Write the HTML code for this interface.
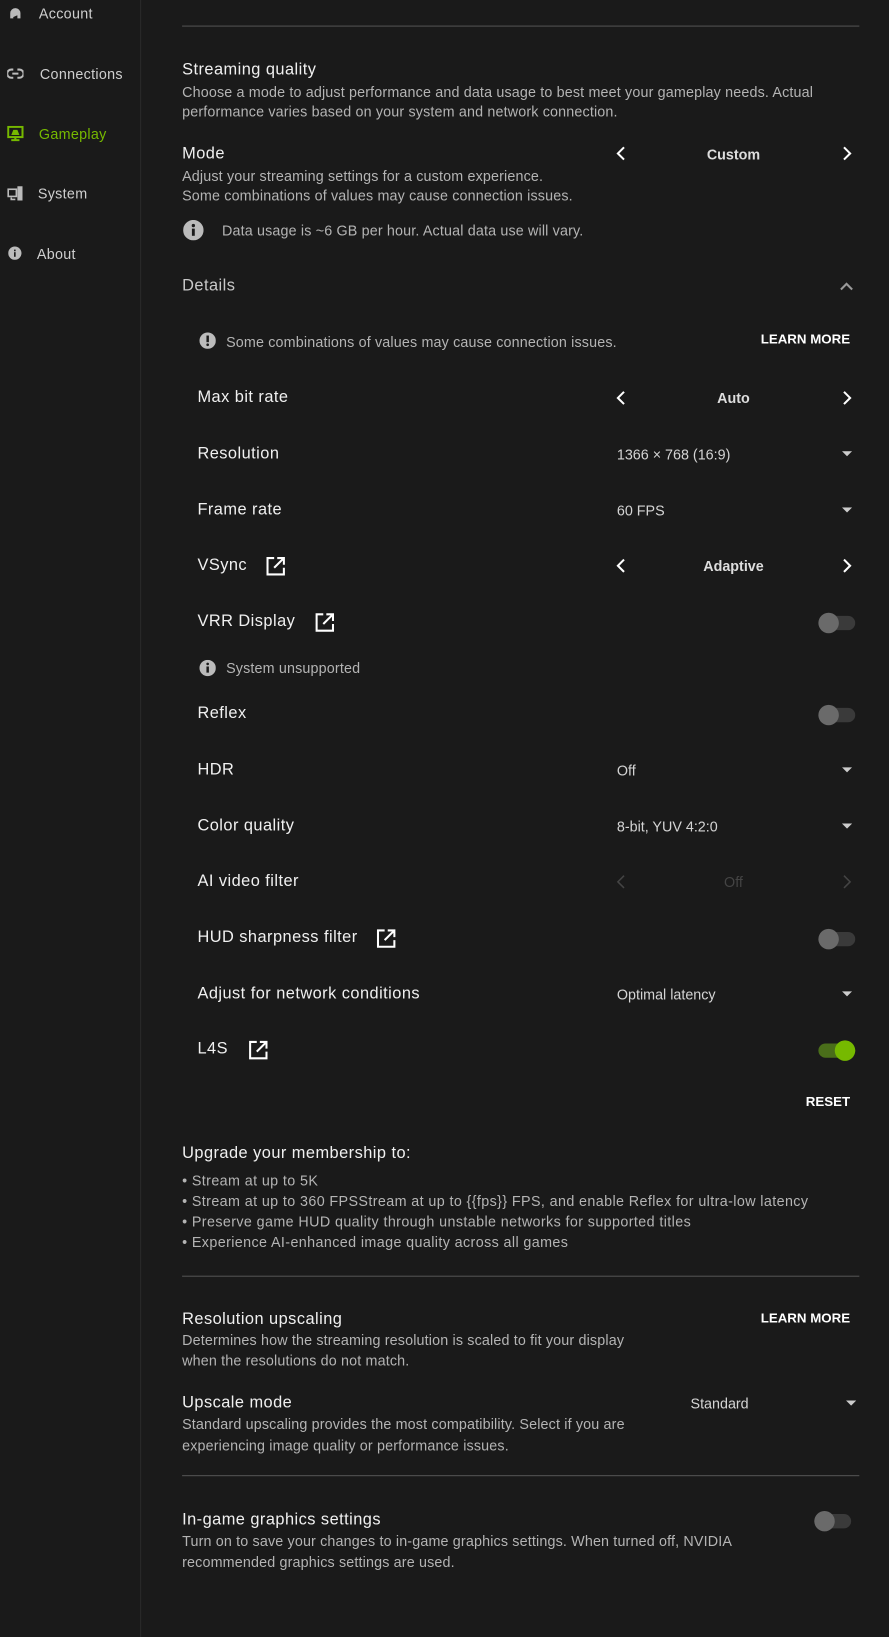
<!DOCTYPE html>
<html><head><meta charset="utf-8"><style>
*{margin:0;padding:0;box-sizing:border-box}
body{width:889px;height:1604px;background:#1a1a1a;font-family:"Liberation Sans",sans-serif;position:relative;overflow:hidden;color:#e6e6e6}
#w{position:absolute;left:0;top:0;width:869px;height:1568px;transform:scale(1.023);transform-origin:0 0}
.a{position:absolute;white-space:nowrap;line-height:20px}
.side{left:0;top:0;width:138px;height:1600px;border-right:1px solid #2c2c2c;position:absolute}
.nav{font-size:14px;color:#cfcfcf;letter-spacing:.3px}
.h{font-size:16px;color:#f0f0f0;letter-spacing:.45px}
.d{font-size:14px;color:#b4b4b4;letter-spacing:.15px}
.v{font-size:14px;color:#d4d4d4;letter-spacing:0}
.b{font-size:13px;font-weight:bold;color:#fff}
.u{font-size:14px;color:#b4b4b4;letter-spacing:.38px}
.line{position:absolute;left:178px;width:662px;height:1px;background:#555}
.tg{position:absolute;width:36px;height:14px;border-radius:7px;background:#3a3a3a}
.tg i{position:absolute;left:0;top:-3px;width:20px;height:20px;border-radius:50%;background:#6a6a6a}
.tg.on{background:#4a6e1a}.tg.on i{left:16px;background:#76b900}
svg{position:absolute}
</style></head><body><div id="w">
<div class="side"></div>
<svg style="left:8px;top:6px" width="14" height="14" viewBox="0 0 14 14"><path d="M2 12V7a5 5 0 0 1 10 0v5h-3V8h2M2 8h3v4H2" fill="#bbb"/></svg>
<svg style="left:7px;top:66px" width="16" height="12" viewBox="0 0 16 12"><path d="M6 2H4a4 4 0 0 0 0 8h2M10 2h2a4 4 0 0 1 0 8h-2M5 6h6" stroke="#bbb" stroke-width="2" fill="none"/></svg>
<svg style="left:7px;top:123px" width="16" height="16" viewBox="0 0 16 16"><rect x="1" y="1" width="14" height="10" fill="none" stroke="#76b900" stroke-width="2"/><path d="M4 9l2-5h4l2 5z M7 11h2v2h3v2H4v-2h3z" fill="#76b900"/></svg>
<svg style="left:7px;top:182px" width="16" height="15" viewBox="0 0 16 15"><rect x="1" y="3" width="8" height="7" fill="none" stroke="#bbb" stroke-width="1.6"/><path d="M4 11v2h4" stroke="#bbb" stroke-width="1.6" fill="none"/><rect x="10" y="0" width="5" height="14" fill="#bbb"/></svg>
<svg style="left:8px;top:241px" width="13" height="13" viewBox="0 0 13 13"><circle cx="6.5" cy="6.5" r="6.5" fill="#bbb"/><rect x="5.7" y="5.5" width="1.6" height="4.5" fill="#1a1a1a"/><rect x="5.7" y="3" width="1.6" height="1.6" fill="#1a1a1a"/></svg>
<div class="a nav" style="left:38px;top:3px">Account</div>
<div class="a nav" style="left:39px;top:62px">Connections</div>
<div class="a nav" style="left:38px;top:121px;color:#76b900">Gameplay</div>
<div class="a nav" style="left:37px;top:179px">System</div>
<div class="a nav" style="left:36px;top:238px">About</div>

<div class="line" style="top:25px"></div>
<div class="a h" style="left:178px;top:59px">Streaming quality</div>
<div class="a d" style="left:178px;top:80px">Choose a mode to adjust performance and data usage to best meet your gameplay needs. Actual</div>
<div class="a d" style="left:178px;top:99px">performance varies based on your system and network connection.</div>
<div class="a h" style="left:178px;top:141px">Mode</div>
<div class="a d" style="left:178px;top:162px">Adjust your streaming settings for a custom experience.</div>
<div class="a d" style="left:178px;top:181px">Some combinations of values may cause connection issues.</div>
<svg style="left:179px;top:215px" width="20" height="20" viewBox="0 0 20 20"><circle cx="10" cy="10" r="10" fill="#bbb"/><rect x="8.6" y="8.5" width="2.8" height="7" fill="#1a1a1a"/><circle cx="10" cy="5.5" r="1.6" fill="#1a1a1a"/></svg>
<div class="a d" style="left:217px;top:215px">Data usage is ~6 GB per hour. Actual data use will vary.</div>
<div class="a h" style="left:178px;top:270px;color:#c8c8c8">Details</div>
<svg style="left:821px;top:276px" width="13" height="8" viewBox="0 0 13 8"><path d="M1 7l5.5-5.5L12 7" stroke="#999" stroke-width="2" fill="none"/></svg>
<svg style="left:195px;top:325px" width="16" height="16" viewBox="0 0 16 16"><circle cx="8" cy="8" r="8" fill="#bbb"/><rect x="6.8" y="3" width="2.4" height="6.5" fill="#1a1a1a"/><circle cx="8" cy="12" r="1.3" fill="#1a1a1a"/></svg>
<div class="a d" style="left:221px;top:324px">Some combinations of values may cause connection issues.</div>
<div class="a b" style="right:38px;top:322px">LEARN MORE</div>

<div class="a h" style="left:193px;top:379px">Max bit rate</div>
<div class="a h" style="left:193px;top:434px">Resolution</div>
<div class="a h" style="left:193px;top:489px">Frame rate</div>
<div class="a h" style="left:193px;top:543px">VSync</div>
<div class="a h" style="left:193px;top:598px">VRR Display</div>
<svg style="left:195px;top:645px" width="16" height="16" viewBox="0 0 16 16"><circle cx="8" cy="8" r="8" fill="#bbb"/><rect x="6.8" y="6.5" width="2.4" height="6" fill="#1a1a1a"/><circle cx="8" cy="4" r="1.3" fill="#1a1a1a"/></svg>
<div class="a d" style="left:221px;top:643px">System unsupported</div>
<div class="a h" style="left:193px;top:688px">Reflex</div>
<div class="a h" style="left:193px;top:743px">HDR</div>
<div class="a h" style="left:193px;top:798px">Color quality</div>
<div class="a h" style="left:193px;top:852px">AI video filter</div>
<div class="a h" style="left:193px;top:907px">HUD sharpness filter</div>
<div class="a h" style="left:193px;top:962px">Adjust for network conditions</div>
<div class="a h" style="left:193px;top:1016px">L4S</div>

<svg style="left:602px;top:143px" width="10" height="14" viewBox="0 0 10 14"><path d="M8 1L2 7l6 6" stroke="#fff" stroke-width="2" fill="none"/></svg>
<svg style="left:823px;top:143px" width="10" height="14" viewBox="0 0 10 14"><path d="M2 1l6 6-6 6" stroke="#fff" stroke-width="2" fill="none"/></svg>
<div class="a v" style="left:667px;width:100px;text-align:center;top:141px;font-weight:bold;color:#ddd">Custom</div>
<svg style="left:602px;top:382px" width="10" height="14" viewBox="0 0 10 14"><path d="M8 1L2 7l6 6" stroke="#fff" stroke-width="2" fill="none"/></svg>
<svg style="left:823px;top:382px" width="10" height="14" viewBox="0 0 10 14"><path d="M2 1l6 6-6 6" stroke="#fff" stroke-width="2" fill="none"/></svg>
<div class="a v" style="left:667px;width:100px;text-align:center;top:379px;font-weight:bold;color:#ddd">Auto</div>
<svg style="left:602px;top:546px" width="10" height="14" viewBox="0 0 10 14"><path d="M8 1L2 7l6 6" stroke="#fff" stroke-width="2" fill="none"/></svg>
<svg style="left:823px;top:546px" width="10" height="14" viewBox="0 0 10 14"><path d="M2 1l6 6-6 6" stroke="#fff" stroke-width="2" fill="none"/></svg>
<div class="a v" style="left:667px;width:100px;text-align:center;top:543px;font-weight:bold;color:#ddd">Adaptive</div>
<svg style="left:602px;top:855px" width="10" height="14" viewBox="0 0 10 14"><path d="M8 1L2 7l6 6" stroke="#444" stroke-width="1.5" fill="none"/></svg>
<svg style="left:823px;top:855px" width="10" height="14" viewBox="0 0 10 14"><path d="M2 1l6 6-6 6" stroke="#444" stroke-width="1.5" fill="none"/></svg>
<div class="a v" style="left:667px;width:100px;text-align:center;top:852px;color:#444">Off</div>

<div class="a v" style="left:603px;top:434px">1366 × 768 (16:9)</div>
<div class="a v" style="left:603px;top:489px">60 FPS</div>
<div class="a v" style="left:603px;top:743px">Off</div>
<div class="a v" style="left:603px;top:798px">8-bit, YUV 4:2:0</div>
<div class="a v" style="left:603px;top:962px">Optimal latency</div>
<div class="a v" style="left:675px;top:1362px">Standard</div>
<svg style="left:823px;top:441px" width="10" height="6"><path d="M0 0h10L5 5z" fill="#ccc"/></svg>
<svg style="left:823px;top:496px" width="10" height="6"><path d="M0 0h10L5 5z" fill="#ccc"/></svg>
<svg style="left:823px;top:750px" width="10" height="6"><path d="M0 0h10L5 5z" fill="#ccc"/></svg>
<svg style="left:823px;top:805px" width="10" height="6"><path d="M0 0h10L5 5z" fill="#ccc"/></svg>
<svg style="left:823px;top:969px" width="10" height="6"><path d="M0 0h10L5 5z" fill="#ccc"/></svg>
<svg style="left:827px;top:1369px" width="10" height="6"><path d="M0 0h10L5 5z" fill="#ccc"/></svg>

<svg style="left:260px;top:544px" width="19" height="19" viewBox="0 0 19 19"><path d="M8 1.5H1.5v16h16V11M11 1.5h6.5V8M17.5 1.5L8 11" stroke="#fff" stroke-width="2" fill="none"/></svg>
<svg style="left:308px;top:599px" width="19" height="19" viewBox="0 0 19 19"><path d="M8 1.5H1.5v16h16V11M11 1.5h6.5V8M17.5 1.5L8 11" stroke="#fff" stroke-width="2" fill="none"/></svg>
<svg style="left:368px;top:908px" width="19" height="19" viewBox="0 0 19 19"><path d="M8 1.5H1.5v16h16V11M11 1.5h6.5V8M17.5 1.5L8 11" stroke="#fff" stroke-width="2" fill="none"/></svg>
<svg style="left:243px;top:1017px" width="19" height="19" viewBox="0 0 19 19"><path d="M8 1.5H1.5v16h16V11M11 1.5h6.5V8M17.5 1.5L8 11" stroke="#fff" stroke-width="2" fill="none"/></svg>

<div class="tg" style="left:800px;top:602px"><i></i></div>
<div class="tg" style="left:800px;top:692px"><i></i></div>
<div class="tg" style="left:800px;top:911px"><i></i></div>
<div class="tg on" style="left:800px;top:1020px"><i></i></div>
<div class="tg" style="left:796px;top:1480px"><i></i></div>

<div class="a b" style="right:38px;top:1067px">RESET</div>
<div class="a h" style="left:178px;top:1118px">Upgrade your membership to:</div>
<div class="a u" style="left:178px;top:1144px">• Stream at up to 5K</div>
<div class="a u" style="left:178px;top:1164px">• Stream at up to 360 FPSStream at up to {{fps}} FPS, and enable Reflex for ultra-low latency</div>
<div class="a u" style="left:178px;top:1184px">• Preserve game HUD quality through unstable networks for supported titles</div>
<div class="a u" style="left:178px;top:1204px">• Experience AI-enhanced image quality across all games</div>
<div class="line" style="top:1247px"></div>
<div class="a h" style="left:178px;top:1280px">Resolution upscaling</div>
<div class="a b" style="right:38px;top:1279px">LEARN MORE</div>
<div class="a d" style="left:178px;top:1300px">Determines how the streaming resolution is scaled to fit your display</div>
<div class="a d" style="left:178px;top:1320px">when the resolutions do not match.</div>
<div class="a h" style="left:178px;top:1362px">Upscale mode</div>
<div class="a d" style="left:178px;top:1382px">Standard upscaling provides the most compatibility. Select if you are</div>
<div class="a d" style="left:178px;top:1403px">experiencing image quality or performance issues.</div>
<div class="line" style="top:1442px"></div>
<div class="a h" style="left:178px;top:1476px">In-game graphics settings</div>
<div class="a d" style="left:178px;top:1496px">Turn on to save your changes to in-game graphics settings. When turned off, NVIDIA</div>
<div class="a d" style="left:178px;top:1517px">recommended graphics settings are used.</div>
</div></body></html>
